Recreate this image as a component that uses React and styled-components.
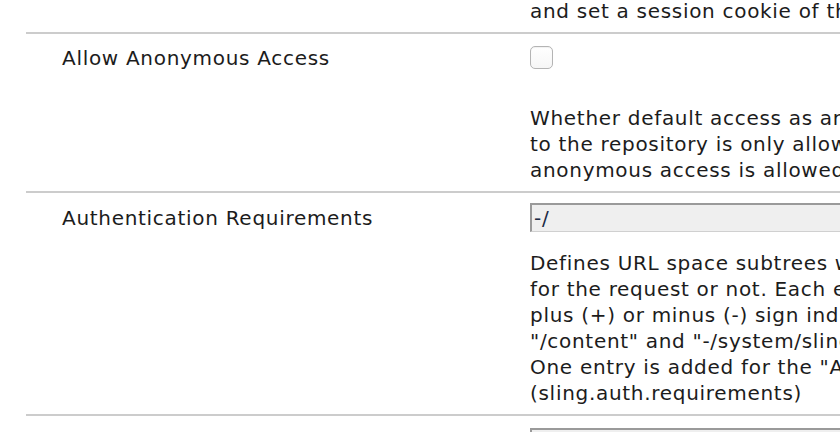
import React from "react";
import styled, { createGlobalStyle } from "styled-components";

const Global = createGlobalStyle`
  html, body {
    margin: 0;
    padding: 0;
    background: #ffffff;
    overflow: hidden;
  }
  body {
    font-family: "DejaVu Sans", Verdana, sans-serif;
    color: #1c1c1c;
  }
`;

const rows = [
  {
    label: "Allow Anonymous Access",
    field: "checkbox",
    lines: [
      "Whether default access as anonymous when no credentials are present in the request is allowed. The default value is \"true\" to allow access without credentials. When set to \"false\" access",
      "to the repository is only allowed if valid credentials are presented. The value of this configuration option is added to list of Authentication Requirements and needs not be explicitly listed. If",
      "anonymous access is allowed the entry added is \"-/\". Otherwise anonymous access is denied and \"+/\" is added to the list. (sling.auth.anonymous)"
    ]
  },
  {
    label: "Authentication Requirements",
    field: "text",
    value: "-/",
    lines: [
      "Defines URL space subtrees which require or don't require authentication. For any request the best matching path configured applies and defines whether authentication is actually required",
      "for the request or not. Each entry in this list can be an absolute path (such as /content) or and absolute URI (such as http://thehost/content). Optionally each entry may be prefixed by a",
      "plus (+) or minus (-) sign indicating that authentication is required (plus) or not required (minus). Example entries are",
      "\"/content\" and \"-/system/sling/login\" which require authentication for /content and allow anonymous access to the login page.",
      "One entry is added for the \"Allow Anonymous Access\" option and the login form page. These entries need not be listed explicitly.",
      "(sling.auth.requirements)"
    ]
  }
];

const Page = styled.div`
  margin-left: 26px;
  margin-top: -2px;
  width: 1400px;
`;

const Row = styled.div`
  display: grid;
  grid-template-columns: 504px 1fr;
  border-top: ${(p) => (p.$first ? "none" : "2px solid #cccccc")};
  padding: ${(p) => (p.$first ? "0 0 8px" : "11px 0 8px")};
  font-size: 20px;
  line-height: 26px;
  letter-spacing: 0.7px;
`;

const Label = styled.div`
  padding-left: 36px;
  padding-top: ${(p) => p.$nudge || 0}px;
  white-space: nowrap;
`;

const Value = styled.div`
  display: flex;
  flex-direction: column;
  align-items: flex-start;
`;

const Check = styled.span`
  display: block;
  width: 21px;
  height: 21px;
  margin-top: 1px;
  border: 1px solid #b4b4b4;
  border-radius: 5px;
  background: linear-gradient(#ffffff, #f6f6f6);
  box-shadow: inset 0 1px 1px rgba(0, 0, 0, 0.06);
`;

const Input = styled.div`
  box-sizing: border-box;
  width: 760px;
  height: 29px;
  margin-top: ${(p) => (p.$last ? 1 : -1)}px;
  padding: 0 2px;
  background: #efefef;
  border-top: 2px solid #9a9a9a;
  border-left: 2px solid #9a9a9a;
  border-right: 1px solid #d0d0d0;
  border-bottom: 1px solid #d0d0d0;
  font-size: 20px;
  line-height: 26px;
  color: #1c2a44;
`;

const Desc = styled.div`
  margin-top: ${(p) => p.$gap}px;
`;

const Line = styled.div`
  white-space: nowrap;
`;

export default function App() {
  return (
    <>
      <Global />
      <Page>
        <Row $first>
          <Label />
          <Value>
            <Line>and set a session cookie of the authenticated user. (sling.auth.anonymous.cookie)</Line>
          </Value>
        </Row>
        {rows.map((row) => (
          <Row key={row.label}>
            <Label $nudge={row.field === "checkbox" ? 0 : 1}>{row.label}</Label>
            <Value>
              {row.field === "checkbox" ? <Check /> : <Input>{row.value}</Input>}
              <Desc $gap={row.field === "checkbox" ? 36 : 18}>
                {row.lines.map((line, i) => (
                  <Line key={i}>{line}</Line>
                ))}
              </Desc>
            </Value>
          </Row>
        ))}
        <Row>
          <Label $nudge={4}>Authentication Handler</Label>
          <Value>
            <Input $last>sling.auth.handler</Input>
          </Value>
        </Row>
      </Page>
    </>
  );
}
